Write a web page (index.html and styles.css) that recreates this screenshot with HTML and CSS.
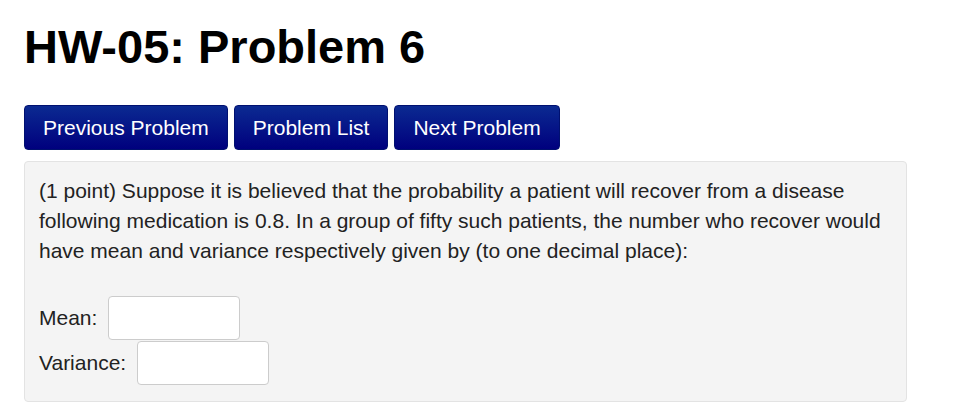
FILE: index.html
```html
<!DOCTYPE html>
<html lang="en">
<head>
    <meta charset="UTF-8">
    <meta name="viewport" content="width=device-width, initial-scale=1.0">
    <title>HW-05: Problem 6</title>
    <link rel="stylesheet" href="styles.css">
</head>
<body>
    <h1 class="title">HW-05: Problem 6</h1>
    <div class="nav">
        <button class="nav-btn">Previous Problem</button>
        <button class="nav-btn">Problem List</button>
        <button class="nav-btn">Next Problem</button>
    </div>
    <div class="problem">
        <p class="text">(1 point) Suppose it is believed that the probability a patient will recover from a disease following medication is 0.8. In a group of fifty such patients, the number who recover would have mean and variance respectively given by (to one decimal place):</p>
        <div class="answer">
            <label for="mean">Mean:</label>
            <input id="mean" type="text">
        </div>
        <div class="answer">
            <label for="variance">Variance:</label>
            <input id="variance" type="text">
        </div>
    </div>
</body>
</html>
```

FILE: styles.css
```css
body {
    margin: 0;
    padding: 0 47px 0 24px;
    font-family: "Liberation Sans", Arial, sans-serif;
    color: #222;
    background: #fff;
}
.title {
    margin: 0;
    padding-top: 21px;
    font-size: 47px;
    line-height: 52px;
    font-weight: bold;
    color: #000;
}
.nav {
    display: flex;
    gap: 6px;
    margin-top: 32px;
}
.nav-btn {
    height: 45px;
    padding: 0 18px;
    font-family: inherit;
    font-size: 21px;
    color: #fff;
    background: linear-gradient(#0b2a91, #00007e);
    border: 1px solid #001070;
    border-radius: 4px;
}
.problem {
    margin-top: 11px;
    padding: 14px 14px 16px;
    background: #f4f4f4;
    border: 1px solid #e3e3e3;
    border-radius: 4px;
}
.text {
    margin: 0 0 30px;
    font-size: 21px;
    line-height: 30px;
}
.answer {
    display: flex;
    align-items: center;
    gap: 11px;
    font-size: 21px;
    margin-bottom: 1px;
}
.answer input {
    width: 132px;
    height: 44px;
    box-sizing: border-box;
    border: 1px solid #ccc;
    border-radius: 4px;
    background: #fff;
    font-size: 20px;
}
.answer:last-child {
    margin-bottom: 0;
}
```
